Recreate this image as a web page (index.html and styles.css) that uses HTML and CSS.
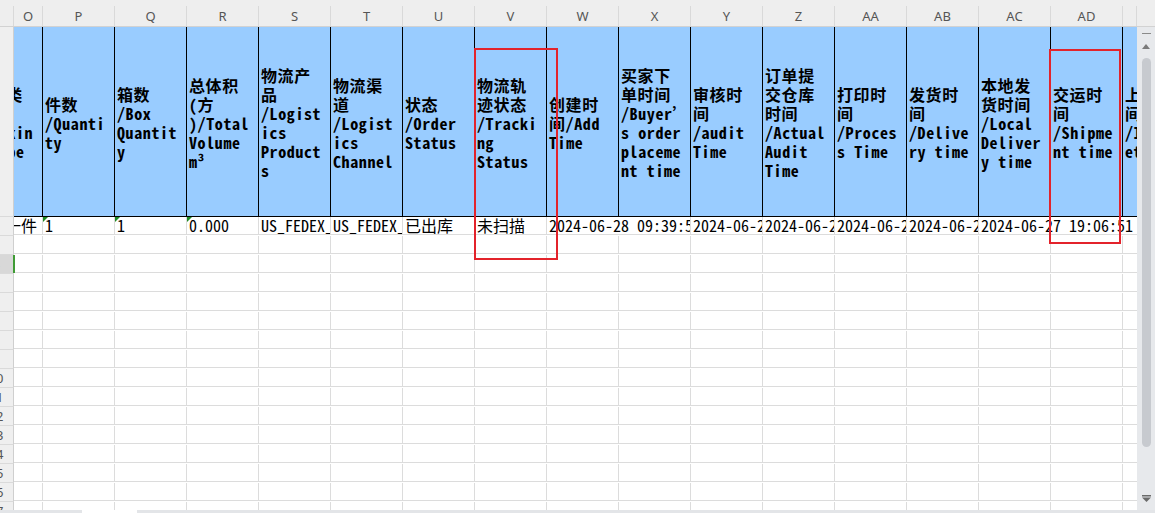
FILE: index.html
```html
<!DOCTYPE html>
<html>
<head>
    <title>订单导出</title>
    <link rel="stylesheet" href="styles.css">
</head>
<body>
<div class="window">
    <div class="letters">
        <div></div>
        <div>O</div>
        <div>P</div>
        <div>Q</div>
        <div>R</div>
        <div>S</div>
        <div>T</div>
        <div>U</div>
        <div>V</div>
        <div>W</div>
        <div>X</div>
        <div>Y</div>
        <div>Z</div>
        <div>AA</div>
        <div>AB</div>
        <div>AC</div>
        <div>AD</div>
        <div></div>
        <div class="fill"></div>
    </div>

    <div class="main">
        <div class="sheet">
            <!-- header row -->
            <div class="row">
                <div class="rh"><span>1</span></div>
                <div class="th"><div class="shift">包装类<br>型<br>/Packin<br>g Type</div></div>
                <div class="th">件数<br>/Quanti<br>ty</div>
                <div class="th">箱数<br>/Box<br>Quantit<br>y</div>
                <div class="th">总体积<br>(方<br>)/Total<br>Volume<br>m³</div>
                <div class="th">物流产<br>品<br>/Logist<br>ics<br>Product<br>s</div>
                <div class="th">物流渠<br>道<br>/Logist<br>ics<br>Channel</div>
                <div class="th">状态<br>/Order<br>Status</div>
                <div class="th">物流轨<br>迹状态<br>/Tracki<br>ng<br>Status</div>
                <div class="th">创建时<br>间/Add<br>Time</div>
                <div class="th">买家下<br>单时间<br>/Buyer’<br>s order<br>placeme<br>nt time</div>
                <div class="th">审核时<br>间<br>/audit<br>Time</div>
                <div class="th">订单提<br>交仓库<br>时间<br>/Actual<br>Audit<br>Time</div>
                <div class="th">打印时<br>间<br>/Proces<br>s Time</div>
                <div class="th">发货时<br>间<br>/Delive<br>ry time</div>
                <div class="th">本地发<br>货时间<br>/Local<br>Deliver<br>y time</div>
                <div class="th">交运时<br>间<br>/Shipme<br>nt time</div>
                <div class="th last">上网时<br>间<br>/Intern<br>et time</div>
            </div>

            <!-- data row -->
            <div class="row">
                <div class="rh"><span>2</span></div>
                <div class="td"><span class="shift">一票一件</span></div>
                <div class="td flag">1</div>
                <div class="td flag">1</div>
                <div class="td flag">0.000</div>
                <div class="td">US_FEDEX_GROUND</div>
                <div class="td">US_FEDEX_GROUND</div>
                <div class="td">已出库</div>
                <div class="td">未扫描</div>
                <div class="td span2">2024-06-28 09:39:51</div>
                <div class="td">2024-06-28 10:12:06</div>
                <div class="td">2024-06-28 10:12:06</div>
                <div class="td">2024-06-28 10:15:33</div>
                <div class="td">2024-06-28 10:15:33</div>
                <div class="td span3 last">2024-06-27 19:06:51</div>
            </div>

            <div class="row"><div class="rh"><span>3</span></div><div class="blank"></div></div>
            <div class="row"><div class="rh sel"><span>4</span></div><div class="blank"><i class="cursor"></i></div></div>
            <div class="row"><div class="rh"><span>5</span></div><div class="blank"></div></div>
            <div class="row"><div class="rh"><span>6</span></div><div class="blank"></div></div>
            <div class="row"><div class="rh"><span>7</span></div><div class="blank"></div></div>
            <div class="row"><div class="rh"><span>8</span></div><div class="blank"></div></div>
            <div class="row"><div class="rh"><span>9</span></div><div class="blank"></div></div>
            <div class="row"><div class="rh"><span>10</span></div><div class="blank"></div></div>
            <div class="row"><div class="rh"><span>11</span></div><div class="blank"></div></div>
            <div class="row"><div class="rh"><span>12</span></div><div class="blank"></div></div>
            <div class="row"><div class="rh"><span>13</span></div><div class="blank"></div></div>
            <div class="row"><div class="rh"><span>14</span></div><div class="blank"></div></div>
            <div class="row"><div class="rh"><span>15</span></div><div class="blank"></div></div>
            <div class="row"><div class="rh"><span>16</span></div><div class="blank"></div></div>
            <div class="row"><div class="rh"><span>17</span></div><div class="blank"></div></div>
            <div class="row"><div class="rh"><span>18</span></div><div class="blank"></div></div>
        </div>

        <div class="vscroll">
            <span class="vs-dash"></span>
            <svg class="vs-up" width="8" height="5" viewBox="0 0 8 5"><path d="M4 0 L8 5 L0 5 Z" fill="#7b7b7b"/></svg>
            <span class="vs-thumb"></span>
            <svg class="vs-down" width="9" height="7" viewBox="0 0 9 7"><rect x="0" y="0" width="9" height="1.5" fill="#6b6b6b"/><path d="M0 2.5 L9 2.5 L4.5 7 Z" fill="#6b6b6b"/></svg>
        </div>
    </div>

    <div class="tabs"><span class="tab"></span></div>

    <!-- red annotation boxes -->
    <div class="mark mark-v"></div>
    <div class="mark mark-ad"></div>
</div>
</body>
</html>
```

FILE: styles.css
```css
* {
    box-sizing: border-box;
}

body {
    margin: 0;
    background: #fff;
    font-family: "Noto Sans Mono CJK SC", "Liberation Mono", "Noto Sans CJK SC", monospace;
    font-size: 16px;
    color: #000;
}

.window {
    position: relative;
    width: 1155px;
    height: 513px;
    overflow: hidden;
    display: flex;
    flex-direction: column;
}

/* column letters */
.letters {
    display: grid;
    grid-template-columns: 14px 29px repeat(15, 72px) 14px 18px;
    height: 27px;
    padding-top: 6px;
    background: #eeeeee;
    border-bottom: 1px solid #d2d2d2;
    font-family: "Noto Sans", sans-serif;
    font-size: 13px;
    color: #555;
}

.letters div {
    border-right: 1px solid #d9d9d9;
    text-align: center;
    line-height: 20px;
}

.letters .fill {
    border-right: none;
}

.main {
    flex: 1;
    display: flex;
    min-height: 0;
}

.sheet {
    flex: 1;
    overflow: hidden;
}

.row {
    display: grid;
    grid-template-columns: 14px 29px repeat(15, 72px) 14px;
}

/* row numbers */
.rh {
    display: flex;
    align-items: center;
    overflow: hidden;
    background: #efefef;
    border-right: 1px solid #cfcfcf;
    border-bottom: 1px solid #dadada;
    font-family: "Noto Sans", sans-serif;
    font-size: 13px;
    color: #555;
}

.rh span {
    flex: none;
    width: 32px;
    margin-left: -20px;
    text-align: center;
}

.rh.sel {
    background: #d8d8d8;
}

/* header cells */
.th {
    height: 190px;
    display: flex;
    align-items: center;
    padding: 3px 0 0 2px;
    background: #99ccff;
    border-right: 1px solid #000;
    border-bottom: 1px solid #000;
    font-weight: bold;
    line-height: 19px;
    letter-spacing: 0.6px;
    white-space: nowrap;
    overflow: hidden;
}

.shift {
    display: block;
    flex: none;
    margin-left: -43px;
}

/* data cells */
.td {
    position: relative;
    height: 18px;
    padding-left: 2px;
    border-right: 1px solid #dcdcdc;
    border-bottom: 1px solid #dcdcdc;
    line-height: 17px;
    white-space: nowrap;
    overflow: hidden;
}

.th.last,
.td.last {
    border-right: none;
}

.span2 {
    grid-column: span 2;
}

.span3 {
    grid-column: span 3;
}

/* number stored as text */
.flag::before {
    content: "";
    position: absolute;
    left: 0;
    top: 0;
    border-top: 5px solid #1d8a22;
    border-right: 5px solid transparent;
}

.blank {
    position: relative;
    grid-column: 2 / -1;
    height: 18px;
    border-bottom: 1px solid #dcdcdc;
    background: repeating-linear-gradient(to right, #dcdcdc 0 1px, transparent 1px 72px) 28px 0;
}

.cursor {
    position: absolute;
    left: -1px;
    top: 0;
    width: 2px;
    height: 18px;
    background: #3f9b35;
}

/* vertical scrollbar */
.vscroll {
    width: 18px;
    display: flex;
    flex-direction: column;
    align-items: center;
    background: #e7e9ec;
}

.vs-dash {
    width: 9px;
    height: 1px;
    margin-top: 6px;
    background: #8a8a8a;
}

.vs-up {
    margin-top: 10px;
}

.vs-thumb {
    width: 9px;
    height: 389px;
    margin-top: 9px;
    border-radius: 5px;
    background: #c7cacf;
}

.vs-down {
    margin-top: auto;
    margin-bottom: 8px;
}

/* sheet tabs strip */
.tabs {
    height: 3px;
    background: #e3e5e8;
    display: flex;
}

.tab {
    width: 55px;
    margin-left: 82px;
    background: #fff;
}

.mark {
    position: absolute;
    border: 2px solid #e3232b;
}

.mark-v {
    left: 474px;
    top: 48px;
    width: 84px;
    height: 212px;
}

.mark-ad {
    left: 1049px;
    top: 49px;
    width: 72px;
    height: 195px;
}
```
